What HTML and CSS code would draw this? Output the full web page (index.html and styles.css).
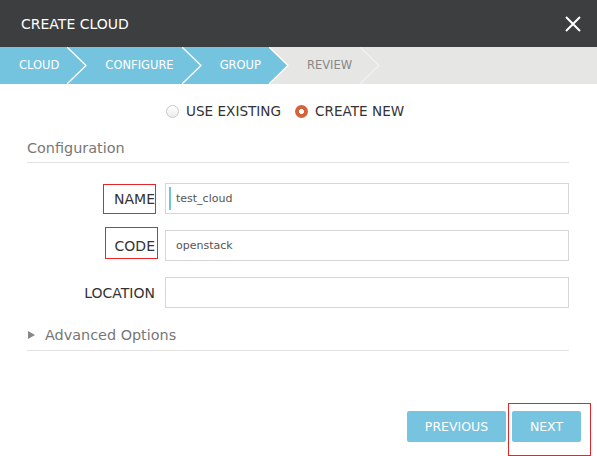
FILE: index.html
```html
<!DOCTYPE html>
<html lang="en">
<head>
<meta charset="utf-8">
<title>Create Cloud</title>
<link rel="stylesheet" href="styles.css">
</head>
<body>
<div class="modal">
  <header class="modal-header">
    <h1 class="title">CREATE CLOUD</h1>
    <button class="close" aria-label="Close">
      <svg width="16" height="16" viewBox="0 0 16 16"><path d="M1 1L15 15M15 1L1 15" stroke="#fff" stroke-width="2" fill="none"/></svg>
    </button>
  </header>

  <nav class="steps">
    <div class="step step-done step-first">CLOUD</div>
    <svg class="sep" width="20" height="37" viewBox="0 0 20 37"><rect width="20" height="37" fill="#75c4df"/><polyline points="0,0 19,18.5 0,37" fill="none" stroke="#fff" stroke-width="1.3"/></svg>
    <div class="step step-done">CONFIGURE</div>
    <svg class="sep" width="20" height="37" viewBox="0 0 20 37"><rect width="20" height="37" fill="#75c4df"/><polyline points="0,0 19,18.5 0,37" fill="none" stroke="#fff" stroke-width="1.3"/></svg>
    <div class="step step-done">GROUP</div>
    <svg class="sep" width="20" height="37" viewBox="0 0 20 37"><rect width="20" height="37" fill="#e6e6e5"/><polygon points="0,0 19,18.5 0,37" fill="#75c4df"/><polyline points="0,0 19,18.5 0,37" fill="none" stroke="#fff" stroke-width="1.3"/></svg>
    <div class="step">REVIEW</div>
    <svg class="sep" width="20" height="37" viewBox="0 0 20 37"><polyline points="0,0 19,18.5 0,37" fill="none" stroke="#f1f1f0" stroke-width="1.3"/></svg>
  </nav>

  <main class="body">
    <div class="radios">
      <label class="radio"><span class="dot"></span>USE EXISTING</label>
      <label class="radio"><span class="dot dot-on"></span>CREATE NEW</label>
    </div>

    <h2 class="section-title">Configuration</h2>

    <div class="form">
      <div class="row">
        <div class="label">NAME<i class="annot annot-name"></i></div>
        <div class="input input-focus">test_cloud</div>
      </div>
      <div class="row">
        <div class="label">CODE<i class="annot annot-code"></i></div>
        <div class="input">openstack</div>
      </div>
      <div class="row">
        <div class="label">LOCATION</div>
        <div class="input"></div>
      </div>
    </div>

    <div class="advanced"><span class="tri"></span>Advanced Options</div>
  </main>

  <footer class="actions">
    <button class="btn btn-prev">PREVIOUS</button>
    <button class="btn btn-next">NEXT<i class="annot annot-next"></i></button>
  </footer>
</div>
</body>
</html>
```

FILE: styles.css
```css
* { box-sizing: border-box; }
html, body { margin: 0; padding: 0; background: #fff; }
body { font-family: "DejaVu Sans", sans-serif; width: 597px; height: 456px; overflow: hidden; }

.modal { width: 597px; }

.modal-header {
  height: 47px;
  background: #3d3e40;
  display: flex;
  align-items: center;
  justify-content: space-between;
  padding: 0 16px 0 21px;
}
.title { margin: 0; font-size: 14px; font-weight: normal; color: #fff; line-height: 20px; }
.close { background: none; border: 0; padding: 0; width: 16px; height: 16px; display: flex; margin-top: 1px; }

.steps {
  height: 37px;
  background: #e6e6e5;
  display: flex;
  align-items: stretch;
}
.step {
  display: flex;
  align-items: center;
  font-size: 11.5px;
  color: #888;
  padding: 1px 8px 0 18px;
  line-height: 1;
}
.step-first { padding-left: 19px; }
.step-done { background: #75c4df; color: #fff; }
.sep { display: block; flex: none; }

.body { padding: 0 28px 0 27px; }

.radios {
  display: flex;
  align-items: center;
  height: 20px;
  margin-top: 17px;
  padding-left: 139px;
  gap: 14px;
}
.radio { display: flex; align-items: center; gap: 7px; font-size: 13.6px; color: #333; }
.dot {
  width: 13px; height: 13px; border-radius: 50%;
  border: 1px solid #c9c9c9;
  background: linear-gradient(#fff, #ececec);
}
.dot-on {
  border: 0;
  background: radial-gradient(circle, #fff 0 2.2px, #d5633a 2.8px);
  margin-top: 1px;
}

.section-title {
  margin: 17px 0 0;
  font-size: 14.4px; font-weight: normal; color: #777;
  line-height: 20px;
  padding-bottom: 4px;
  border-bottom: 1px solid #e3e3e3;
}

.form { display: flex; flex-direction: column; gap: 16px; margin-top: 20px; }
.row { display: grid; grid-template-columns: 128px 1fr; column-gap: 10px; height: 31px; }
.label {
  position: relative;
  display: flex; align-items: center; justify-content: flex-end;
  font-size: 14px; color: #333;
  padding-top: 1px;
}
.input {
  position: relative;
  border: 1px solid #d6d6d6;
  display: flex; align-items: center;
  padding-left: 10px;
  font-size: 11px; color: #555;
  background: #fff;
}
.input-focus::before {
  content: "";
  position: absolute;
  left: 3px; top: 3px; bottom: 3px;
  width: 2px;
  background: #75c4df;
}

.annot { position: absolute; border: 1px solid #e8262a; display: block; pointer-events: none; }
.annot-name { right: -1px; top: 1px; width: 53px; height: 30px; }
.annot-code { right: -3px; top: -3px; width: 53px; height: 32px; }
.annot-next { left: -4px; top: -8px; width: 83px; height: 53px; }

.advanced {
  display: flex; align-items: center;
  margin-top: 17px;
  font-size: 14.4px; color: #777;
  line-height: 20px;
  padding-bottom: 5px;
  border-bottom: 1px solid #e3e3e3;
}
.tri {
  width: 0; height: 0;
  border-top: 4px solid transparent;
  border-bottom: 4px solid transparent;
  border-left: 7px solid #888;
  margin: 0 10px 0 1px;
}

.actions {
  display: flex;
  justify-content: flex-end;
  gap: 6px;
  margin-top: 60px;
  padding-right: 16px;
}
.btn {
  position: relative;
  height: 31px;
  border: 0;
  border-radius: 2px;
  background: #77c4e0;
  color: #fff;
  font-family: "DejaVu Sans", sans-serif;
  font-size: 12.5px;
  padding: 0;
}
.btn-prev { width: 99px; }
.btn-next { width: 69px; }
```
